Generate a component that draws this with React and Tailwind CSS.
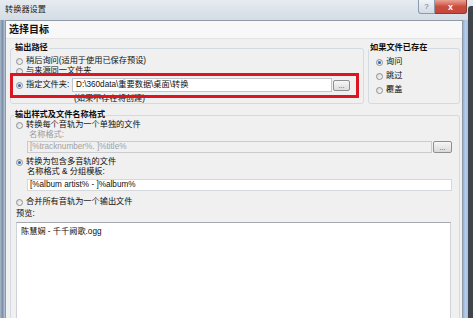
import React from 'react';

const Radio = ({ checked }) => (
    <span className="w-[7px] h-[7px] rounded-full border border-[#8c8f94] bg-linear-to-br from-[#d9d9d9] to-[#fbfbfb] flex items-center justify-center shrink-0">
        {checked && <span className="w-[3px] h-[3px] rounded-full bg-[#2c63b4]" />}
    </span>
);

const Row = ({ checked, h = 'h-[10px]', children }) => (
    <div className={`flex items-center gap-[3px] ${h}`}>
        <Radio checked={checked} />
        <span className="whitespace-nowrap">{children}</span>
    </div>
);

const App = () => {
    return (
        <div className="w-[473px] h-[318px] overflow-hidden relative flex flex-col bg-[#d9e1ea] text-[8.2px] leading-[10px] text-[#0f0f0f] font-[family-name:'Liberation_Sans','Noto_Sans_CJK_SC',sans-serif]">
            {/* Title bar */}
            <div className="h-[20px] flex shrink-0 bg-linear-to-b from-[#e6ebf0] to-[#d4dce5]">
                <div className="pl-[5px] pt-[5px] text-[#222]">转换器设置</div>
                <div className="ml-auto flex h-[14px]">
                    <div className="w-[17px] h-full border border-t-0 border-[#8c9aae] rounded-bl-[3px] bg-linear-to-b from-[#f1f4f8] to-[#d2dbe5] flex items-center justify-center text-[8px] text-[#6a7380]">?</div>
                    <div className="w-[32px] h-full border border-t-0 border-l-0 border-[#8b3c35] rounded-br-[3px] bg-linear-to-b from-[#e9a294] via-[#cb4d40] to-[#c4473b] flex items-center justify-center text-white text-[9px] font-bold">x</div>
                </div>
                <div className="w-[6px] pt-[6px] pl-[1px]">
                    <div className="h-full bg-[#40444b] rounded-tl-[3px]" />
                </div>
            </div>

            {/* Body */}
            <div className="flex flex-1 min-h-0">
                <div className="w-[5px] shrink-0 bg-linear-to-r from-[#a9b9cc] via-[#7d8ea5] to-[#bccadb]" />

                <div className="flex-1 min-w-0 bg-[#f0f0f0] border-t border-l border-r border-[#8e9aa8] flex flex-col overflow-hidden">
                    {/* Header */}
                    <div className="h-[18px] shrink-0 bg-[#f8f8f8] border-b border-[#e4e4e4] pl-[3px] text-[10px] font-bold leading-[17px] text-[#111]">
                        选择目标
                    </div>

                    {/* Output path + existing file */}
                    <div className="flex pl-[4px] mt-[4px] gap-[4px] shrink-0">
                        <fieldset className="w-[354px] h-[61px] border border-[#d3dbe2] rounded-[3px]">
                            <legend className="ml-[3px] px-[1px] font-bold leading-[10px]">输出路径</legend>
                            <div className="pl-[5px] pt-[3px] flex flex-col">
                                <Row>稍后询问(适用于使用已保存预设)</Row>
                                <Row>与来源同一文件夹</Row>
                                <div className="flex items-center h-[14px] mt-[2px]">
                                    <Radio checked />
                                    <span className="ml-[3px] w-[46px] whitespace-nowrap">指定文件夹:</span>
                                    <div className="w-[260px] h-[14px] bg-white border border-[#c2c6cc] pl-[3px] flex items-center whitespace-nowrap">
                                        D:\360data\重要数据\桌面\转换
                                    </div>
                                    <div className="ml-[1px] w-[17px] h-[11px] border border-[#8e8f8f] rounded-[2px] bg-linear-to-b from-[#f6f6f6] to-[#dcdcdc] flex items-center justify-center text-[7px] leading-[7px] text-[#444]">...</div>
                                </div>
                                <div className="pl-[58px] h-[10px] mt-[2px] whitespace-nowrap">(如果不存在将创建)</div>
                            </div>
                        </fieldset>

                        <fieldset className="w-[92px] h-[61px] border border-[#d3dbe2] rounded-[3px]">
                            <legend className="px-[1px] font-bold leading-[10px]">如果文件已存在</legend>
                            <div className="pl-[7px] pt-[2px] flex flex-col">
                                <Row checked h="h-[14px]">询问</Row>
                                <Row h="h-[14px]">跳过</Row>
                                <Row h="h-[14px]">覆盖</Row>
                            </div>
                        </fieldset>
                    </div>

                    {/* Output style */}
                    <fieldset className="ml-[4px] mt-[6px] w-[450px] h-[240px] shrink-0 border border-[#d3dbe2] rounded-[3px]">
                        <legend className="ml-[3px] px-[1px] font-bold leading-[10px]">输出样式及文件名称格式</legend>
                        <div className="pl-[5px] flex flex-col">
                            <Row>转换每个音轨为一个单独的文件</Row>
                            <div className="pl-[13px] h-[10px] text-[#9a9a9a]">名称格式:</div>
                            <div className="flex mt-[1px] ml-[11px] h-[12px]">
                                <div className="w-[405px] h-full border border-[#c9cbce] bg-[#f0f0f0] pl-[2px] flex items-center text-[#a2a2a2] whitespace-nowrap">[%tracknumber%. ]%title%</div>
                                <div className="ml-[1px] w-[19px] h-full border border-[#8e8f8f] rounded-[2px] bg-linear-to-b from-[#f6f6f6] to-[#dadada] flex items-center justify-center text-[7px] leading-[7px] text-[#444]">...</div>
                            </div>
                            <div className="mt-[4px]">
                                <Row checked>转换为包含多音轨的文件</Row>
                            </div>
                            <div className="pl-[11px] h-[10px] whitespace-nowrap">名称格式 &amp; 分组模板:</div>
                            <div className="mt-[2px] ml-[11px] w-[425px] h-[12px] border border-[#d4d7db] bg-white pl-[2px] flex items-center whitespace-nowrap">[%album artist% - ]%album%</div>
                            <div className="mt-[6px]">
                                <Row>合并所有音轨为一个输出文件</Row>
                            </div>
                            <div className="mt-[2px] h-[10px]">预览:</div>
                            <div className="mt-[3px] w-[435px] h-[140px] bg-white border border-[#cfd2d6] border-t-[#a6a9ad] pl-[4px] pt-[4px]">
                                陈慧娴 - 千千阙歌.ogg
                            </div>
                        </div>
                    </fieldset>
                </div>

                <div className="w-[5px] shrink-0 bg-linear-to-r from-[#8fb0da] via-[#b6cdea] to-[#a3bfe4]" />
                <div className="w-[5px] shrink-0 bg-[#40444b]" />
            </div>

            {/* Annotation box */}
            <div className="absolute left-[10px] top-[73px] w-[349px] h-[25px] border-[3px] border-[#dc1521]" />
        </div>
    );
};

export default App;
